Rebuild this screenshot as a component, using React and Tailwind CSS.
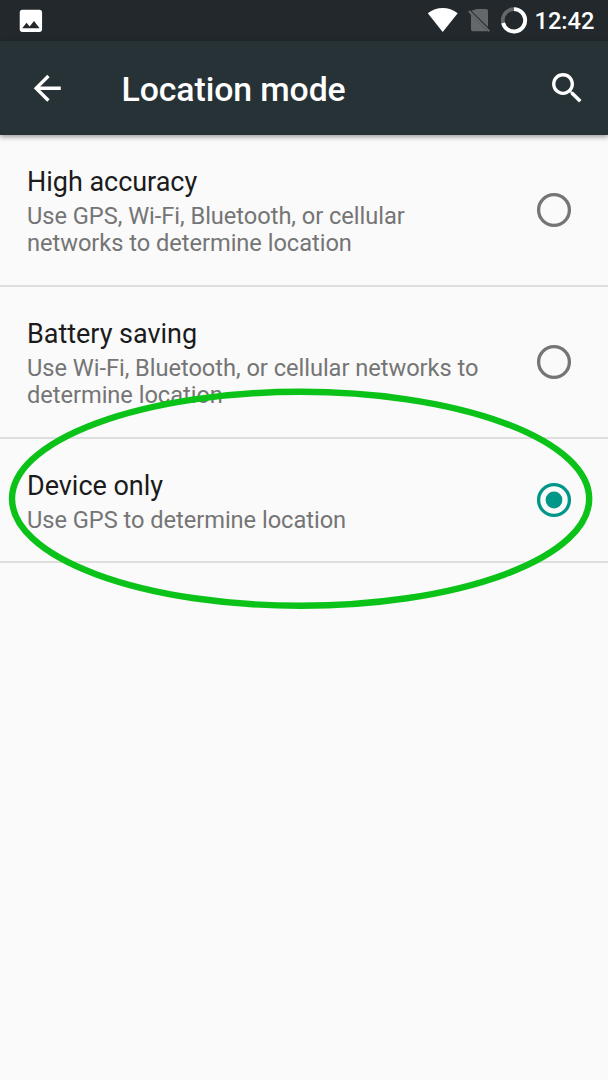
import React from "react";

const OPTIONS = [
  {
    title: "High accuracy",
    lines: ["Use GPS, Wi-Fi, Bluetooth, or cellular", "networks to determine location"],
  },
  {
    title: "Battery saving",
    lines: ["Use Wi-Fi, Bluetooth, or cellular networks to", "determine location"],
  },
  { title: "Device only", lines: ["Use GPS to determine location"], selected: true },
];

function StatusBar() {
  return (
    <div className="flex h-[40.5px] items-center bg-[#22282b] text-white">
      <svg className="ml-[15.5px] mt-[1px] h-[29.8px] w-[29.8px]" viewBox="0 0 24 24" fill="currentColor">
        <path d="M21 19V5c0-1.1-.9-2-2-2H5c-1.1 0-2 .9-2 2v14c0 1.1.9 2 2 2h14c1.1 0 2-.9 2-2zM8.5 13.5l2.5 3.01L14.5 12l4.5 6H5l3.5-4.5z" />
      </svg>
      <svg className="ml-auto h-[40px] w-[104px] shrink-0" viewBox="424 0 104 40">
        <path d="M427.8 13.2C436.5 6.3 449 6.3 457.7 13.2L442.7 32Z" fill="#fff" />
        <path d="M476.6 9H486.2Q488 9 488 10.8V27L471.4 10.8ZM470.5 14L487.6 31.2H472.8Q471 31.2 471 29.4V14Z" fill="#64686a" />
        <path d="M469 11.1L489.2 31.3" stroke="#64686a" strokeWidth="2.2" />
        <circle cx="514" cy="20.3" r="11.2" fill="none" stroke="#64686a" strokeWidth="3.6" />
        <path d="M514 9.1A11.2 11.2 0 1 1 503.1 23" fill="none" stroke="#fff" strokeWidth="3.9" />
      </svg>
      <div className="ml-[6.5px] mt-[2px] w-[73.5px] whitespace-nowrap text-[23.65px] font-medium leading-[28px]">12:42</div>
    </div>
  );
}

function AppBar() {
  return (
    <header className="relative flex h-[94.5px] items-center bg-[#273237] text-white shadow-[0_2px_5px_rgba(0,0,0,0.38)]">
      <svg className="ml-[27.3px] h-[40.5px] w-[40.5px]" viewBox="0 0 24 24" fill="currentColor">
        <path d="M20 11H7.83l5.59-5.59L12 4l-8 8 8 8 1.41-1.41L7.83 13H20v-2z" />
      </svg>
      <h1 className="ml-[53.8px] mt-[4px] text-[33.8px] font-medium leading-[40px] tracking-[-0.1px]">Location mode</h1>
      <svg className="ml-auto mr-[20.5px] h-[40.5px] w-[40.5px]" viewBox="0 0 24 24" fill="currentColor">
        <path d="M15.5 14h-.79l-.28-.27C15.41 12.59 16 11.11 16 9.5 16 5.91 13.09 3 9.5 3S3 5.91 3 9.5 5.91 16 9.5 16c1.61 0 3.09-.59 4.23-1.57l.27.28v.79l5 4.99L20.49 19l-4.99-5zm-6 0C7.01 14 5 11.99 5 9.5S7.01 5 9.5 5 14 7.01 14 9.5 11.99 14 9.5 14z" />
      </svg>
    </header>
  );
}

function Radio({ selected }) {
  return (
    <svg
      className={selected ? "h-[36px] w-[36px] shrink-0 text-[#009688]" : "h-[36px] w-[36px] shrink-0 text-[#757575]"}
      viewBox="0 0 36 36"
    >
      <circle cx="18" cy="18" r="15.4" fill="none" stroke="currentColor" strokeWidth="3.3" />
      {selected && <circle cx="18" cy="18" r="8.4" fill="currentColor" />}
    </svg>
  );
}

function Option({ title, lines, selected }) {
  return (
    <li className={`flex items-start justify-between border-b-2 border-[#dedede] pl-[27px] pr-[36px] ${selected ? "h-[124px]" : "h-[152px]"}`}>
      <div className="whitespace-nowrap pt-[31px]">
        <div className="mb-[5.4px] text-[27px] leading-[32px] tracking-[-0.03px] text-[#1b1b1b]">{title}</div>
        {lines.map((line) => (
          <div key={line} className="text-[23.65px] leading-[27px] tracking-[-0.04px] text-[#757575]">{line}</div>
        ))}
      </div>
      <div className="flex h-full items-center">
        <Radio selected={selected} />
      </div>
    </li>
  );
}

export default function App() {
  return (
    <div className="relative h-[1080px] w-[608px] overflow-hidden bg-[#fafafa] font-[Roboto,sans-serif]">
      <StatusBar />
      <AppBar />
      <ul>
        {OPTIONS.map((option) => (
          <Option key={option.title} {...option} />
        ))}
      </ul>
      <svg className="pointer-events-none absolute left-0 top-[380px] h-[240px] w-[608px]" viewBox="0 380 608 240">
        <ellipse cx="300.6" cy="498.8" rx="288.6" ry="107" fill="none" stroke="#0bc218" strokeWidth="6.4" />
      </svg>
    </div>
  );
}
